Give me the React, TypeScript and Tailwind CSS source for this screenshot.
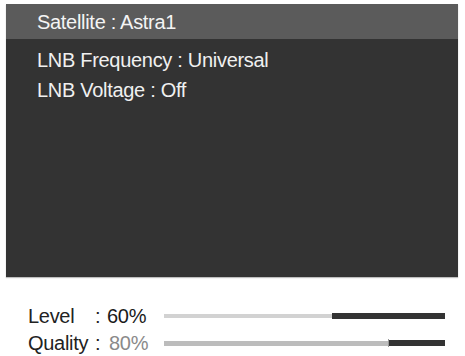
export default function App() {
  const items = ["LNB Frequency : Universal", "LNB Voltage : Off"];
  return (
    <div className="w-[465px] h-[356px] bg-white overflow-hidden" style={{ fontFamily: '"Liberation Sans", Arial, sans-serif' }}>
      <div className="ml-[6px] mt-[4px] w-[452px] h-[273px] bg-[#333333] shadow-[0_1px_1px_rgba(0,0,0,0.25)]">
        <div className="h-[35px] bg-[#5b5b5b] flex items-center pl-[31px] text-[20px] text-[#f4f4f4] tracking-[-0.3px]">
          Satellite : Astra1
        </div>
        <div className="pt-[6px]">
          {items.map((t) => (
            <div key={t} className="h-[30px] flex items-center pl-[31px] text-[20px] text-[#f0f0f0] tracking-[-0.3px]">
              {t}
            </div>
          ))}
        </div>
      </div>

      <div className="mt-[26px] pl-[28px] flex flex-col gap-[1px] text-[20px] text-[#222] tracking-[-0.3px]">
        <div className="h-[26px] flex items-center">
          <span className="w-[67px]">Level</span>
          <span className="w-[12px]">:</span>
          <span className="w-[57px] text-[#1a1a1a]">60%</span>
          <div className="relative w-[281px] h-[6px] flex items-center">
            <div className="h-[4px] w-[168px] bg-[#d2d2d2]" />
            <div className="h-[6px] flex-1 bg-[#333333]" />
          </div>
        </div>
        <div className="h-[26px] flex items-center">
          <span className="w-[67px]">Quality</span>
          <span className="w-[14px]">:</span>
          <span className="w-[55px] text-[#8a8a8a]">80%</span>
          <div className="relative w-[281px] h-[8px] flex items-center">
            <div className="h-[5px] w-[224px] bg-[#bcbcbc]" />
            <div className="h-[8px] w-[1px] bg-[#9a9a9a]" />
            <div className="h-[6px] flex-1 bg-[#333333]" />
          </div>
        </div>
      </div>
    </div>
  );
}
